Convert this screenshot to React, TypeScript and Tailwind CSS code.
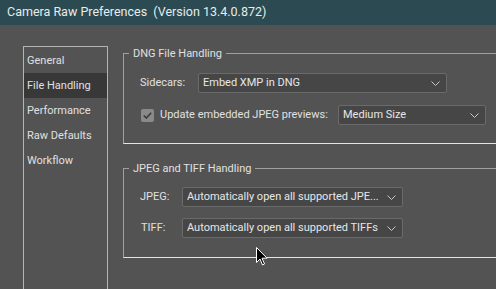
import React from "react";

const Chevron = () => (
  <svg width="9" height="5" viewBox="0 0 9 5" className="shrink-0">
    <path d="M0.5 0.5 L4.5 4.5 L8.5 0.5" fill="none" stroke="#c8c8c8" strokeWidth="1" />
  </svg>
);

const Select = ({ text, w, cls = "" }: { text: string; w: string; cls?: string }) => (
  <div
    className={`h-[20px] ${w} ${cls} shrink-0 bg-[#464646] border border-[#6a6a6a] rounded-[2px] flex items-center justify-between pl-[4px] pr-[6px] text-[#e6e6e6]`}
  >
    <span className="whitespace-nowrap overflow-hidden min-w-0">{text}</span>
    <Chevron />
  </div>
);

const Group = ({ title, children, h }: { title: string; children: React.ReactNode; h: string }) => (
  <div className={`relative ${h} border-l border-t border-b border-l-[#a0a0a0] border-t-[#a0a0a0] border-b-[#e4e4e4]`}>
    <div className="absolute -top-[8px] left-[5px] bg-[#535353] px-[4px] leading-[16px] text-[#e0e0e0]">{title}</div>
    {children}
  </div>
);

export default function App() {
  const items = ["General", "File Handling", "Performance", "Raw Defaults", "Workflow"];
  return (
    <div
      className="w-[496px] h-[289px] bg-[#535353] relative overflow-hidden text-[11px] text-[#e0e0e0] flex flex-col"
      style={{ fontFamily: 'Roboto, "Noto Sans", sans-serif' }}
    >
      <div className="h-[25px] shrink-0 bg-[#2b4a51] text-[#e8ecec] text-[12.5px] pl-[7px] flex items-center whitespace-pre">
        Camera Raw Preferences  (Version 13.4.0.872)
      </div>
      <div className="flex flex-1 pt-[21px] pl-[23px]">
        <div className="w-[85px] border border-b-0 border-[#b4b4b4] pt-[1px]">
          {items.map((it) => (
            <div
              key={it}
              className={`h-[25px] flex items-center pl-[3px] pt-[1px] ${it === "File Handling" ? "bg-[#383838]" : ""}`}
            >
              {it}
            </div>
          ))}
        </div>
        <div className="flex-1 pl-[15px] pt-[7px]">
          <Group title="DNG File Handling" h="h-[91px]">
            <div className="pt-[19px] pl-[16px] flex items-center">
              <span className="w-[58px] shrink-0">Sidecars:</span>
              <Select text="Embed XMP in DNG" w="w-[249px]" />
            </div>
            <div className="pt-[12px] pl-[17px] flex items-center">
              <div className="w-[13px] h-[13px] shrink-0 bg-[#8a8a8a] rounded-[2px] flex items-center justify-center">
                <svg width="9" height="7" viewBox="0 0 9 7">
                  <path d="M0.8 3.5 L3.3 6 L8.2 0.8" fill="none" stroke="#3a3a3a" strokeWidth="1.6" />
                </svg>
              </div>
              <span className="ml-[6px] w-[178px] shrink-0 whitespace-nowrap">Update embedded JPEG previews:</span>
              <Select text="Medium Size" w="w-[148px]" />
            </div>
          </Group>
          <div className="h-[24px]" />
          <Group title="JPEG and TIFF Handling" h="h-[90px]">
            <div className="pt-[18px] pl-[16px] flex items-center">
              <span className="w-[42px] shrink-0">JPEG:</span>
              <Select text="Automatically open all supported JPE..." w="w-[221px]" />
            </div>
            <div className="pt-[11px] pl-[16px] flex items-center">
              <span className="w-[42px] shrink-0 pl-[1px]">TIFF:</span>
              <Select text="Automatically open all supported TIFFs" w="w-[221px]" />
            </div>
          </Group>
        </div>
      </div>
      <svg className="absolute left-[256px] top-[247px]" width="12" height="19" viewBox="0 0 12 19">
        <path d="M0.5 0.5 L0.5 15.5 L4 12 L6.5 18 L8.5 17 L6 11.2 L11 11.2 Z" fill="#000" stroke="#fff" strokeWidth="1" />
      </svg>
    </div>
  );
}
